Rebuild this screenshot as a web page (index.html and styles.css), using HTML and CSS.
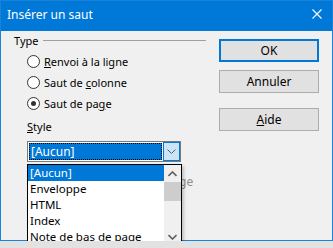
FILE: index.html
```html
<!DOCTYPE html>
<html lang="fr">
<head>
    <meta charset="UTF-8">
    <title>Insérer un saut</title>
    <link rel="stylesheet" href="styles.css">
</head>
<body>
    <div class="dialog">
        <div class="titlebar">
            <span class="title">Insérer un saut</span>
            <svg class="close" width="10" height="10" viewBox="0 0 10 10">
                <path d="M0.5 0.5 L9.5 9.5 M9.5 0.5 L0.5 9.5" stroke="#fff" stroke-width="1.1" fill="none"/>
            </svg>
        </div>

        <div class="content">
            <div class="left">
                <div class="group-title">
                    <span>Type</span>
                    <span class="rule"></span>
                </div>

                <label class="radio-row">
                    <span class="radio"></span>
                    <span><u>R</u>envoi à la ligne</span>
                </label>
                <label class="radio-row">
                    <span class="radio"></span>
                    <span>Saut de <u>c</u>olonne</span>
                </label>
                <label class="radio-row">
                    <span class="radio checked"></span>
                    <span>Saut de pa<u>g</u>e</span>
                </label>

                <div class="style-label"><u>S</u>tyle</div>

                <div class="combo">
                    <div class="combo-value"><span>[Aucun]</span></div>
                    <div class="combo-btn">
                        <svg width="9" height="5" viewBox="0 0 9 5">
                            <path d="M0.5 0.5 L4.5 4.5 L8.5 0.5" stroke="#5a5a5a" stroke-width="1" fill="none"/>
                        </svg>
                    </div>
                </div>

                <!-- only the tail of the disabled label shows past the open list -->
                <div class="check-row disabled">
                    <span class="tail">ge</span>
                </div>
            </div>

            <div class="buttons">
                <button class="default">OK</button>
                <button>Annuler</button>
                <button class="help"><u>A</u>ide</button>
            </div>
        </div>

        <!-- open dropdown of the Style combo -->
        <div class="listbox">
            <ul class="items">
                <li class="selected">[Aucun]</li>
                <li>Enveloppe</li>
                <li>HTML</li>
                <li>Index</li>
                <li>Note de bas de page</li>
            </ul>
            <div class="scrollbar">
                <div class="arrow">
                    <svg width="9" height="6" viewBox="0 0 9 6">
                        <path d="M0.5 5 L4.5 1 L8.5 5" stroke="#606060" stroke-width="1.6" fill="none"/>
                    </svg>
                </div>
                <div class="thumb"></div>
                <div class="track"></div>
                <div class="arrow">
                    <svg width="9" height="6" viewBox="0 0 9 6">
                        <path d="M0.5 1 L4.5 5 L8.5 1" stroke="#606060" stroke-width="1.6" fill="none"/>
                    </svg>
                </div>
            </div>
        </div>
    </div>
</body>
</html>
```

FILE: styles.css
```css
body {
    margin: 0;
    background: #e2e2e2;
    font-family: "Noto Sans", "Open Sans", sans-serif;
    font-size: 11px;
    color: #000;
}
.dialog {
    position: relative;
    width: 333px;
    height: 241px;
    box-sizing: border-box;
    border: 1px solid #1883d7;
    background: #f0f0f0;
    box-shadow: 0 3px 8px rgba(0, 0, 0, 0.22);
}
.titlebar {
    height: 30px;
    background: #0078d7;
    color: #fff;
    display: flex;
    align-items: center;
    justify-content: space-between;
    padding: 0 10px 0 6px;
    font-size: 12px;
}
.title {
    margin-top: -4px;
}
.close {
    margin-top: -4px;
}
.content {
    display: flex;
    justify-content: space-between;
    padding: 1px 13px 0 13px;
}
.left {
    width: 192px;
}
.group-title {
    display: flex;
    align-items: center;
    height: 16px;
}
.rule {
    flex: 1;
    height: 1px;
    background: #a0a0a0;
    margin-left: 5px;
    margin-top: 1px;
}
.radio-row {
    display: flex;
    align-items: center;
    height: 21px;
    padding-left: 13px;
}
.radio-row:first-of-type {
    margin-top: 3px;
}
.radio {
    width: 11px;
    height: 11px;
    border: 1px solid #333;
    border-radius: 50%;
    background: #fff;
    margin-right: 4px;
    position: relative;
}
.radio.checked::after {
    content: "";
    position: absolute;
    left: 3px;
    top: 3px;
    width: 5px;
    height: 5px;
    border-radius: 50%;
    background: #333;
}
.style-label {
    padding-left: 13px;
    margin-top: 5px;
    height: 16px;
    line-height: 16px;
}
.combo {
    display: flex;
    width: 154px;
    height: 21px;
    box-sizing: border-box;
    border: 1px solid #7a7a7a;
    margin: 6px 0 0 13px;
    background: #fff;
}
.combo-value {
    flex: 1;
    padding: 1px;
}
.combo-value span {
    display: flex;
    align-items: center;
    height: 100%;
    box-sizing: border-box;
    padding-left: 2px;
    background: #0078d7;
    color: #fff;
    outline: 1px dotted #000;
    outline-offset: -1px;
    font-size: 12px;
}
.combo-btn {
    width: 17px;
    box-sizing: border-box;
    border: 1px solid #0078d7;
    background: #cce4f7;
    display: flex;
    align-items: center;
    justify-content: center;
}
.check-row {
    display: flex;
    align-items: center;
    height: 16px;
    margin-top: 11px;
    padding-left: 165px;
}
.check-row.disabled {
    color: #8c8c8c;
    font-size: 12px;
}
.buttons {
    display: flex;
    flex-direction: column;
    width: 100px;
    margin-top: 7px;
}
button {
    height: 23px;
    box-sizing: border-box;
    border: 1px solid #adadad;
    background: #e1e1e1;
    font-family: inherit;
    font-size: 12px;
    color: #000;
    margin-bottom: 8px;
    padding: 0;
}
button.default {
    border: 2px solid #0078d7;
}
button.help {
    margin-top: 7px;
}
.listbox {
    position: absolute;
    left: 26px;
    top: 163px;
    width: 155px;
    height: 82px;
    box-sizing: border-box;
    border: 1px solid #000;
    background: #fff;
    display: flex;
    box-shadow: 2px 2px 3px rgba(0, 0, 0, 0.2);
}
.items {
    flex: 1;
    list-style: none;
    margin: 0;
    padding: 0;
    font-size: 11.5px;
}
.items li {
    height: 16px;
    line-height: 16px;
    padding-left: 2px;
}
.items li.selected {
    background: #0078d7;
    color: #fff;
}
.scrollbar {
    width: 17px;
    background: #f0f0f0;
    display: flex;
    flex-direction: column;
}
.arrow {
    height: 17px;
    display: flex;
    align-items: center;
    justify-content: center;
}
.thumb {
    height: 19px;
    background: #cdcdcd;
}
.track {
    flex: 1;
}
```
